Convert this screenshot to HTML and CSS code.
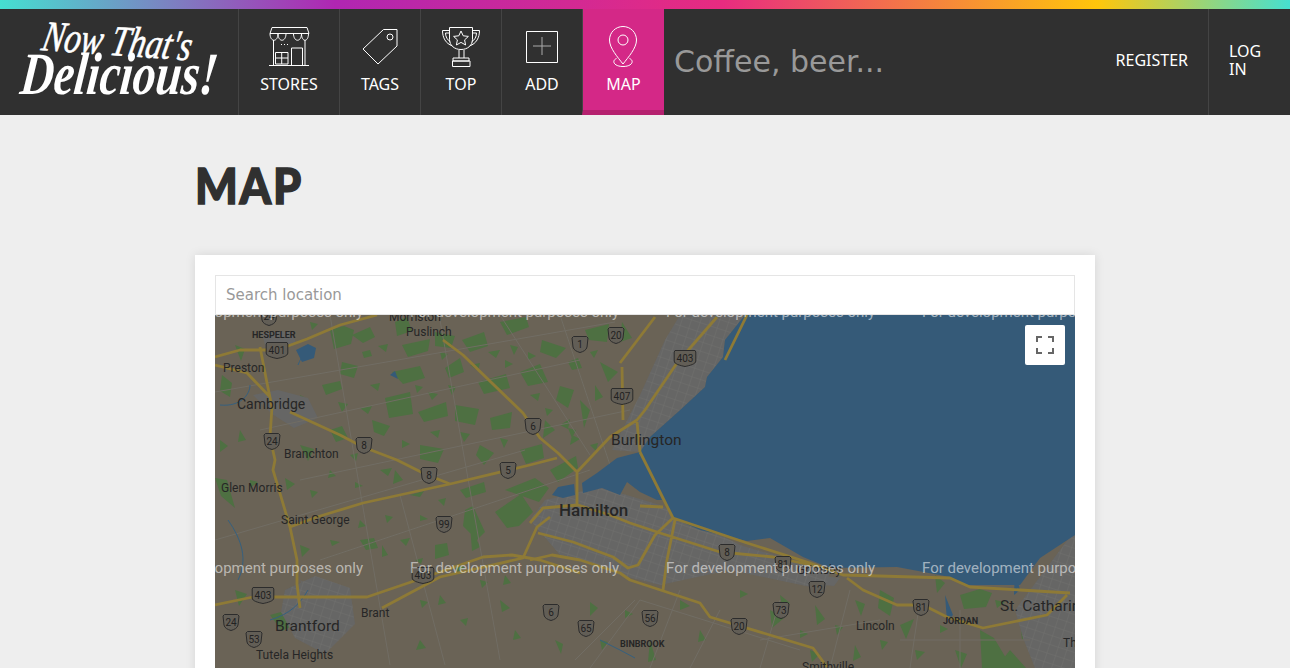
FILE: index.html
```html
<!DOCTYPE html>
<html lang="en">
<head>
    <meta charset="UTF-8">
    <meta name="viewport" content="width=device-width, initial-scale=1.0">
    <title>Map | Now That's Delicious!</title>
    <link rel="stylesheet" href="styles.css">
</head>
<body>
    <header class="top">
        <nav class="nav">
            <a class="logo" href="#">
                <span class="logo-small">Now That's</span>
                <span class="logo-big">Delicious!</span>
            </a>
            <a class="nav-link nav-link--wide" href="#">
                <svg class="nav-icon" viewBox="269 25 41 43">
                    <path d="M272 27.500h35l2 6h-39zM270 33.500c0 9 8 9 8 0c0 9 8 9 8 0h7.500c0 9 8 9 8 0c0 9 7 9 7 0"/>
                    <path d="M273.500 40v25M305 40v25M269 65.500h40M291.500 65v-17h11v17M275.500 52.500h12.500v11.500h-12.500zM281.700 52.500v11.500M275.500 58h12.500"/>
                    <path d="M281 44.500h1M284 44.500h1M287 44.500h1"/>
                </svg>
                <span>STORES</span>
            </a>
            <a class="nav-link" href="#">
                <svg class="nav-icon" viewBox="360 25 41 43">
                    <path d="M383.500 29.500h13.500v16.500l-19 18l-15-15z"/>
                    <circle cx="390" cy="37" r="3"/>
                </svg>
                <span>TAGS</span>
            </a>
            <a class="nav-link" href="#">
                <svg class="nav-icon" viewBox="441 25 41 43">
                    <path d="M449.500 27.500h23v12c0 6-5 10-11.500 10s-11.500-4-11.500-10z"/>
                    <path d="M449.500 30.500h-7c0 7 3 13 10 15.500M472.500 30.500h7c0 7-3 13-10 15.500M449.500 33h-4c0 4 2 7 5 9M472.500 33h4c0 4-2 7-5 9"/>
                    <path d="M461 31l2.200 4.800l5.200 .6l-3.800 3.500l1 5.100l-4.600-2.600l-4.600 2.600l1-5.100l-3.800-3.500l5.200-.6z"/>
                    <path d="M459 50v8M464 50v8M453 58h16v3h-16zM452.500 61h17.500v5.500h-17.500z"/>
                </svg>
                <span>TOP</span>
            </a>
            <a class="nav-link" href="#">
                <svg class="nav-icon" viewBox="522 25 41 43">
                    <path d="M526.500 31.500h31v31h-31z"/>
                    <path class="nav-plus" d="M542 37v18M533 46h18"/>
                </svg>
                <span>ADD</span>
            </a>
            <a class="nav-link nav-link--active" href="#">
                <svg class="nav-icon" viewBox="603 25 41 43">
                    <path d="M623 26.500c-7.500 0-13.500 6-13.500 13.500c0 8 8 17 13.500 24c5.500-7 13.500-16 13.500-24c0-7.500-6-13.500-13.500-13.500z"/>
                    <circle cx="623" cy="40" r="5"/>
                    <path d="M616.500 58.500c-5 2-3 8 6.500 8s11.500-6 6.500-8"/>
                </svg>
                <span>MAP</span>
            </a>
            <input class="nav-search" type="text" placeholder="Coffee, beer...">
            <a class="nav-text" href="#">REGISTER</a>
            <a class="nav-text nav-text--login" href="#">LOG IN</a>
        </nav>
    </header>

    <main class="inner">
        <h1 class="page-title">MAP</h1>
        <div class="card">
            <input class="location" type="text" placeholder="Search location">
            <div class="map">
                <svg class="map-canvas" viewBox="215 315 860 520">
                    <defs>
                        <pattern id="streets" width="9" height="9" patternUnits="userSpaceOnUse" patternTransform="rotate(18)">
                            <path d="M0 0h9M0 0v9" stroke="#7c7b78" stroke-width="1" fill="none"/>
                        </pattern>
                        <path id="shield" d="M-10 -7.500h20l.8 1.500v9c0 3-5.800 4.500-10.800 5.500c-5-1-10.800-2.500-10.800-5.500v-9z"/>
                        <path id="shield-s" d="M-6.500 -7.500h13l1.500 1.500l-1 9c-.5 3-3.500 4.500-7 5.500c-3.500-1-6.500-2.500-7-5.500l-1-9z"/>
                    </defs>

                    <rect x="215" y="315" width="860" height="520" fill="#6a6356"/>

                    <!-- farmland and woods -->
                    <path class="green" d="M330 330l14-4l10 4l-3 14l-17 5zM352 335l18-8l5 10l-12 6zM395 322l12-5l5 14l-15 5zM402 345l28-6l-2 12l-20 6zM435 332l20 4l-4 12l-16-2zM462 340l22-8l4 14l-18 6zM500 322l26-5l3 10l-22 8zM542 340l24 8l-10 10l-16-6zM585 330l24-6l-2 18l-18-2zM622 322l10 16l-12 4zM600 362l18 10l-10 10zM445 368l15-10l4 14l-15 6zM392 372l28-6l5 12l-22 6zM342 362l16 4l-4 12l-14-4zM478 382l28-8l4 14l-26 6zM520 372l20-8l8 18l-20 4zM560 386l14 4l-6 18l-12-8zM322 385l18-4l2 8l-16 6zM385 398l25-6l3 22l-24 4zM418 412l28-10l2 14l-24 6zM455 405l24 4l-4 16l-20-4zM490 418l22-6l-2 16l-18 2zM545 420l10 10l-12 8zM580 400l10 10l-6 18zM595 385l8 12l-8 4zM235 345l10 4l-4 12zM330 430l12-4l6 12l-12 4zM372 420l18 6l-6 10l-10-4zM420 445l24 4l-6 14l-18-4zM480 445l14 8l-10 12l-8-10zM520 450l22-6l2 14l-18 6zM300 445l14 4l-6 12zM222 375l10 8l-2 14l-10-6zM215 478l12 2l8 28l-14-12zM395 470l8 10l-10 4zM285 478l10 6l-8 6zM460 490l24-8l2 10l-20 6zM465 510l8-4l12 26l-8 8l-14-14zM505 490l30-12l14 10l-10 14zM495 512l26-18l12 18l-14 14l-12 2zM550 470l26-14l2 12l-20 14zM360 540l14-2l4 10l-12 2zM435 545l12-2l2 12l-14 4zM470 525l10 22l-8 4zM382 545l6 10l-6 2zM300 545l10 4l-8 8zM290 587l12 10l-14 8zM270 615l22-6l6 14l-16 8zM235 590l12 4l-8 12zM555 640l8 4l-2 10zM590 602l8 6l-8 8zM420 640l6 8l-10 2zM500 600l10 8l-8 4zM650 640l6 20l-8 2zM780 595l10 8l-8 6zM770 610l14 8l-12 10zM815 605l10 14l-8 6zM880 590l14 8l-4 18l-12-8zM855 600l10 4l-4 12zM935 575l10 8l-8 10zM960 595l20-6l12 4l-6 14l-22 2zM900 625l14-6l-8 20zM980 630l14 8l18 30h-30zM1020 620l18-6l-16 26zM1010 650l16 18h-30zM955 650l12 4l-6 14zM810 650l10 4l-8 8zM855 645l6 12l-8 4zM660 568l-10 12l20 0zM645 555l-8 8l-14-4z"/>
                    <path class="green" d="M310 322l8 2l-6 6zM378 346l10-2l-2 8zM362 352l8-2l2 6l-8 2zM440 352l8 2l-6 6zM488 352l12-2l-4 8zM510 345l8 2l-4 8zM528 352l8 4l-8 4zM568 362l10-4l4 10l-10 2zM590 352l8-2l-4 8zM470 365l10-2l-2 8zM505 360l8 4l-8 4zM415 385l8 2l-6 6zM370 385l10-2l-2 8zM300 395l8 4l-6 4zM338 402l10 2l-6 8zM360 408l12-2l-4 8zM428 392l10 2l-6 6zM448 385l8 2l-4 8zM530 395l10-2l-2 8zM545 408l8 2l-6 6zM430 432l10-2l-2 8zM402 440l8 4l-8 4zM460 432l10 2l-6 8zM500 438l8 2l-4 8zM568 428l8 2l-4 8zM350 455l8-2l-2 8zM380 470l12-2l-4 8zM330 470l6 6l-8 2zM310 490l8 2l-6 6zM355 482l8 4l-8 2zM410 495l14-4l-4 6zM385 515l8 2l-6 6zM420 515l8 4l-8 2zM438 500l8-2l-2 8zM360 520l6 6l-8 2zM330 540l10 2l-8 4zM400 540l10-2l-4 8zM415 560l8-2l-2 6zM455 565l10 2l-8 6zM505 575l6 8l-8 2zM480 580l8 2l-6 6zM440 595l6 8l-8 2zM420 600l8 2l-6 6zM460 620l8-2l-2 8zM515 630l6 8l-8 2zM600 640l8 2l-6 8zM625 610l8 4l-8 4zM680 600l10 6l-10 4zM700 630l6 10l-8 2zM740 590l8 4l-8 4zM835 625l8 2l-6 8zM800 630l8 4l-8 4zM880 640l8 2l-6 8zM915 650l10 2l-8 8zM940 625l8 4l-8 4zM995 600l10 2l-8 6zM1040 640l12-4l-8 14zM600 525l8 8l-8 6zM635 550l10 2l-6 12zM618 567l14-2l-6 8zM590 445l8-2l-2 8zM560 425l10-6l-2 10zM572 435l8 4l-10 6zM240 430l6 10l-8 2zM250 480l8 2l-8 6zM220 440l8 6l-8 6z"/>

                    <!-- built up areas -->
                    <path class="urban" d="M253 395l25-5l30 8l10 20l-24 10l-22-14zM262 333l30-2l4 12l-30 6zM285 590l30-14l35 12l5 36l-30 30l-30-16l-14-26zM530 520l15-20l55-13l60 18l80 40l90 27l-5 18l-95-20l-70 15l-40-10l-60-20zM612 450L640 395L665 340L680 315H745L725 340L723 357L707 377L705 387L678 412L650 437L640 452zM1015 610l60-80v138h-40l-12-30zM790 572l50 6l-6 8l-40-4zM300 580l15 8l-8 8z"/>
                    <path class="streets" d="M530 520l15-20l55-13l60 18l80 40l90 27l-5 18l-95-20l-70 15l-40-10l-60-20zM285 590l30-14l35 12l5 36l-30 30l-30-16l-14-26zM612 450L640 395L665 340L680 315H745L725 340L723 357L707 377L705 387L678 412L650 437L640 452zM1015 610l60-80v138h-40l-12-30z"/>

                    <!-- side roads -->
                    <path class="minor" d="M215 392l400-70M260 430l320-70M330 315l60 350M440 320l60 340M300 480l330-70M215 540l310-90M320 560l270-90M400 495l45 170M560 315l50 150M500 315l90 140M640 600l-50 68M680 590l-30 78M720 610l-30 58M780 600l-20 68M850 590l-20 78M920 600l-10 68M960 610v58M900 640h130M760 640l120-20M640 600l160 50M575 660l60-60"/>

                    <path class="creek" d="M220 405c20 2 30-10 30-20M298 365c4-10 8-14 14-18M228 520c14 20 20 40 10 60M270 620c20-6 30-16 38-30M600 640l20 10l15 8"/>
                    <path class="lake" d="M296 350l12-6l8 4l-2 10l-12 4zM390 375l5-4l3 8zM552 495l6-8l16-3l1 11l-12 3zM582 483l15-10l20-15l23-6l5 11l17 37l-5 0l-17-8l-13-10l-7 13l-18-7l-19 5zM1015 570l5 20l-6 5zM945 595l8 20l-6 6z"/>

                    <path class="lake" d="M745 315L725 340L723 357L707 377L705 387L678 412L650 437L640 452L673 518L700 530L747 541L770 538L803 557L830 568L897 567L950 577L967 585L1020 585L1040 558L1075 535V315Z"/>

                    <path class="road" d="M215 357l25-7h37l30-11l33-14l37-10M260 347l7 36l5 24l-2 30l5 23l-2 10l17 57l7 33v24l3 24M215 365l32 8l23 24M290 412l50 23l23 12l34 13l26 13l27 11M443 340l20 15l60 58l17 25l18 15l19 19v33M290 527l27-10l46-14l87-19l80-19l27-7M215 605l38-8h44h70l50-17l66-23l29-2l28 5l40 13M382 608l58-31l83-19l14-31l13-10M640 452l33 66l74 25l63 20l33 12l107 3l20 9l100 6M847 578l16 12l34 15h26l24 12l36 11l64-13l20-20M530 523l13-15l35-3l32 10l20 8l30 10l60 19l53 5l57 12M675 520l-8 40l-4 30M673 518l-18 17l-17 30l-10 3l-15-11l-40-15l-35-9M640 506l23 1M530 560l22-5l28 5l40 13l10 7l70 23l10 14l103 31l14 19M577 472l33-35l27-17l8-10l32-47l40-46M622 367l1 53M655 317l-35 46M725 360l22-45M640 452l-3-30"/>

                    <g class="shields">
                        <use href="#shield" x="277" y="350"/><text x="277" y="353.500">401</text>
                        <use href="#shield-s" x="269" y="317"/><text x="269" y="320">24</text>
                        <use href="#shield-s" x="580" y="344"/><text x="580" y="347.500">1</text>
                        <use href="#shield-s" x="616" y="335"/><text x="616" y="338.500">20</text>
                        <use href="#shield" x="685" y="358"/><text x="685" y="361.500">403</text>
                        <use href="#shield" x="622" y="396"/><text x="622" y="399.500">407</text>
                        <use href="#shield-s" x="533" y="426"/><text x="533" y="429.500">6</text>
                        <use href="#shield-s" x="364" y="445"/><text x="364" y="448.500">8</text>
                        <use href="#shield-s" x="272" y="441"/><text x="272" y="444.500">24</text>
                        <use href="#shield-s" x="429" y="475"/><text x="429" y="478.500">8</text>
                        <use href="#shield-s" x="508" y="470"/><text x="508" y="473.500">5</text>
                        <use href="#shield-s" x="444" y="524"/><text x="444" y="527.500">99</text>
                        <use href="#shield" x="423" y="575"/><text x="423" y="578.500">403</text>
                        <use href="#shield" x="263" y="595"/><text x="263" y="598.500">403</text>
                        <use href="#shield-s" x="231" y="622"/><text x="231" y="625.500">24</text>
                        <use href="#shield-s" x="254" y="639"/><text x="254" y="642.500">53</text>
                        <use href="#shield-s" x="551" y="612"/><text x="551" y="615.500">6</text>
                        <use href="#shield-s" x="586" y="628"/><text x="586" y="631.500">65</text>
                        <use href="#shield-s" x="650" y="618"/><text x="650" y="621.500">56</text>
                        <use href="#shield-s" x="739" y="626"/><text x="739" y="629.500">20</text>
                        <use href="#shield-s" x="781" y="610"/><text x="781" y="613.500">73</text>
                        <use href="#shield-s" x="817" y="589"/><text x="817" y="592.500">12</text>
                        <use href="#shield-s" x="783" y="564"/><text x="783" y="567.500">81</text>
                        <use href="#shield-s" x="727" y="552"/><text x="727" y="555.500">8</text>
                        <use href="#shield-s" x="921" y="607"/><text x="921" y="610.500">81</text>
                    </g>

                    <g class="places">
                        <text x="389" y="321" class="pl-s">Morriston</text>
                        <text x="406" y="336" class="pl-s">Puslinch</text>
                        <text x="223" y="372" class="pl-s">Preston</text>
                        <text x="237" y="409" class="pl-m">Cambridge</text>
                        <text x="284" y="458" class="pl-s">Branchton</text>
                        <text x="221" y="492" class="pl-s">Glen Morris</text>
                        <text x="281" y="524" class="pl-s">Saint George</text>
                        <text x="361" y="617" class="pl-s">Brant</text>
                        <text x="275" y="631" class="pl-l">Brantford</text>
                        <text x="256" y="659" class="pl-s">Tutela Heights</text>
                        <text x="611" y="445" class="pl-l">Burlington</text>
                        <text x="559" y="516" class="pl-xl">Hamilton</text>
                        <text x="797" y="574" class="pl-s">Grimsby</text>
                        <text x="856" y="630" class="pl-s">Lincoln</text>
                        <text x="1000" y="611" class="pl-l">St. Catharines</text>
                        <text x="1063" y="647" class="pl-s">Thorold</text>
                        <text x="802" y="671" class="pl-s">Smithville</text>
                        <text x="252" y="338" class="pl-x">HESPELER</text>
                        <text x="943" y="624" class="pl-x">JORDAN</text>
                        <text x="620" y="647" class="pl-x">BINBROOK</text>
                    </g>

                    <g class="watermark">
                        <text x="154" y="317">For development purposes only</text>
                        <text x="410" y="317">For development purposes only</text>
                        <text x="666" y="317">For development purposes only</text>
                        <text x="922" y="317">For development purposes only</text>
                        <text x="154" y="573">For development purposes only</text>
                        <text x="410" y="573">For development purposes only</text>
                        <text x="666" y="573">For development purposes only</text>
                        <text x="922" y="573">For development purposes only</text>
                    </g>
                </svg>
                <button class="fullscreen" type="button" aria-label="Toggle fullscreen view">
                    <svg viewBox="0 0 18 18" width="18" height="18">
                        <path d="M0 6V0h6v2H2v4zM12 0h6v6h-2V2h-4zM18 12v6h-6v-2h4v-4zM6 18H0v-6h2v4h4z"/>
                    </svg>
                </button>
            </div>
        </div>
    </main>
</body>
</html>
```

FILE: styles.css
```css
html, body {
    margin: 0;
    overflow: hidden;
}

body {
    font-family: "DejaVu Sans", sans-serif;
    background-color: #eee;
    color: #303030;
}

a {
    color: #fff;
    text-decoration: none;
}

.top {
    border-top: 9px solid transparent;
    border-image: linear-gradient(90deg, #45e0d1 0%, #b026b2 26%, #e82b80 56%, #ffc60b 85%, #45e0d1 100%) 1;
    background-color: #303030;
}

.nav {
    display: flex;
    align-items: stretch;
    height: 106px;
}

.logo {
    width: 238px;
    flex: none;
    display: flex;
    flex-direction: column;
    align-items: center;
    font-family: "Liberation Serif", serif;
    font-style: italic;
}

.logo-small {
    font-size: 33px;
    line-height: 30px;
    margin-top: 17px;
    margin-left: -2px;
    transform: rotate(4deg) skewX(-8deg) scaleY(1.3);
    -webkit-text-stroke: 0.5px #fff;
}

.logo-big {
    font-size: 46px;
    line-height: 36px;
    font-weight: bold;
    transform: skewX(-6deg) scaleY(1.3);
}

.nav-link {
    width: 80px;
    flex: none;
    border-left: 1px solid #444;
    display: flex;
    flex-direction: column;
    align-items: center;
    padding-top: 16px;
    font-family: "Noto Sans", sans-serif;
    font-size: 16px;
    line-height: 22px;
}

.nav-link--wide {
    width: 100px;
}

.nav-link--active {
    width: 81px;
    height: 85px;
    background-color: #d42887;
    border-bottom: 5px solid #b5216f;
}

.nav-icon {
    width: 41px;
    height: 43px;
    margin-bottom: 5px;
    fill: none;
    stroke: #fff;
    stroke-width: 1;
}

.nav-plus {
    stroke: #aaa;
}

.nav-search {
    flex: 1;
    min-width: 0;
    border: 0;
    outline: 0;
    background: none;
    padding: 0 10px 2px;
    font-family: "DejaVu Sans", sans-serif;
    font-size: 30px;
    color: #fff;
}

.nav-search::placeholder {
    color: #999;
    opacity: 1;
}

.nav-text {
    flex: none;
    display: flex;
    align-items: center;
    padding: 0 20px 4px;
    font-family: "Noto Sans", sans-serif;
    font-size: 16px;
    line-height: 18px;
}

.nav-text--login {
    width: 41px;
    border-left: 1px solid #444;
}

.inner {
    width: 900px;
    margin: 0 auto;
}

.page-title {
    margin: 0;
    padding: 33px 0 33px;
    font-family: Lato, sans-serif;
    font-weight: 900;
    font-size: 50px;
    line-height: 74px;
    letter-spacing: 2px;
    transform: scaleX(0.9);
    transform-origin: left center;
    -webkit-text-stroke: 1.500px #303030;
}

.card {
    background-color: #fff;
    padding: 20px;
    box-shadow: 0 0 10px rgba(0, 0, 0, 0.1);
}

.location {
    display: block;
    width: 100%;
    height: 40px;
    box-sizing: border-box;
    border: 1px solid #e5e5e5;
    outline: 0;
    padding: 0 10px;
    font-family: "DejaVu Sans", sans-serif;
    font-size: 15px;
}

.location::placeholder {
    color: #999;
    opacity: 1;
}

.map {
    position: relative;
    height: 520px;
    overflow: hidden;
}

.map-canvas {
    display: block;
    width: 860px;
    height: 520px;
}

.green {
    fill: #4e7042;
}

.urban {
    fill: #666665;
}

.streets {
    fill: url(#streets);
    opacity: 0.5;
}

.minor {
    fill: none;
    stroke: #716d64;
    stroke-width: 1;
}

.creek {
    fill: none;
    stroke: #35607f;
    stroke-width: 1;
}

.lake {
    fill: #355a78;
}

.road {
    fill: none;
    stroke: #8e7a36;
    stroke-width: 2.800;
    stroke-linejoin: round;
}

.shields use {
    fill: #625e56;
    stroke: #2c2c2c;
    stroke-width: 1;
}

.shields text {
    font-family: Roboto, sans-serif;
    font-size: 10px;
    text-anchor: middle;
    fill: #222;
}

.places text {
    font-family: Roboto, sans-serif;
    fill: #262626;
}

.pl-s {
    font-size: 12px;
}

.pl-m {
    font-size: 14px;
}

.pl-l {
    font-size: 15.500px;
}

.pl-xl {
    font-size: 17px;
    font-weight: 500;
}

.pl-x {
    font-size: 9px;
    font-weight: 700;
}

.watermark text {
    font-family: Roboto, sans-serif;
    font-size: 15px;
    fill: rgba(255, 255, 255, 0.55);
}

.fullscreen {
    position: absolute;
    top: 10px;
    right: 10px;
    width: 40px;
    height: 40px;
    padding: 0;
    border: 0;
    border-radius: 2px;
    background-color: #fff;
    display: flex;
    align-items: center;
    justify-content: center;
}

.fullscreen svg {
    fill: #666;
}
```
